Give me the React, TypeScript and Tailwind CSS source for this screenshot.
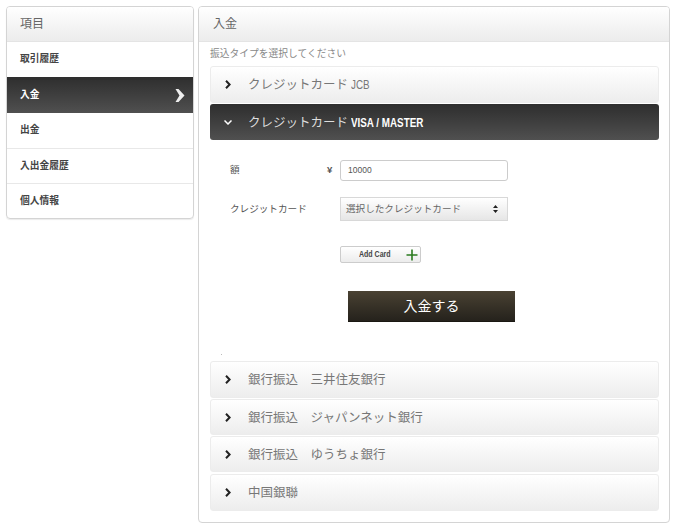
const font = { fontFamily: '"Liberation Sans", "Noto Sans CJK JP", sans-serif' };

const menu = ["取引履歴", "入金", "出金", "入出金履歴", "個人情報"];

function Arrow() {
  return (
    <svg width="6" height="9" viewBox="0 0 6 9" fill="none" className="ml-[14px] stroke-[#222]" strokeWidth="2">
      <path d="M1 0.8 4.6 4.5 1 8.2" />
    </svg>
  );
}

function Row({ label, latin, className = "h-[37px]" }: { label: string; latin?: string; className?: string }) {
  return (
    <div className={`flex items-center rounded-[3px] border border-[#ececec] bg-gradient-to-b from-white to-[#ededed] ${className}`}>
      <Arrow />
      <span className="ml-[17px] pt-px text-[12.5px] text-[#777]">
        {label}
        {latin && <span className="ml-[3px] inline-block origin-left scale-x-[0.82] text-[12px]">{latin}</span>}
      </span>
    </div>
  );
}

export default function App() {
  return (
    <div style={font} className="flex h-[530px] w-[674px] items-start gap-[4px] bg-white pl-[6px] pt-[6px]">
      <div className="w-[188px] overflow-hidden rounded-[4px] border border-[#d4d4d4] shadow-[0_1px_1px_rgba(0,0,0,0.08)]">
        <div className="flex h-[35px] items-center border-b border-[#e4e4e4] bg-gradient-to-b from-white to-[#ececec] pl-[13px] text-[12px] text-[#666]">
          項目
        </div>
        {menu.map((m, i) =>
          i === 1 ? (
            <div key={m} className="flex h-[36px] items-center justify-between bg-gradient-to-b from-[#2e2e2e] to-[#505050] pl-[13px] pr-[8px] text-[9.75px] font-bold text-white">
              {m}
              <svg width="10" height="13" viewBox="0 0 10 13" className="fill-[#eee]">
                <path d="M0.5 0H3.5L9.5 6.5 3.5 13H0.5L4.5 6.5Z" />
              </svg>
            </div>
          ) : (
            <div key={m} className={`flex h-[35px] items-center pl-[13px] text-[9.75px] font-bold text-[#444] ${i > 2 ? "border-t border-[#e8e8e8]" : ""}`}>
              {m}
            </div>
          )
        )}
      </div>

      <div className="h-[517px] w-[472px] overflow-hidden rounded-[4px] border border-[#d4d4d4]">
        <div className="flex h-[35px] items-center border-b border-[#e4e4e4] bg-gradient-to-b from-white to-[#ececec] pl-[14px] text-[12px] text-[#666]">
          入金
        </div>
        <div className="pl-[11px] pr-[10px]">
          <p className="flex h-[24px] items-center text-[9.75px] text-[#888]">振込タイプを選択してください</p>
          <Row label="クレジットカード" latin="JCB" />
          <div className="mt-px flex h-[36px] items-center rounded-[3px] bg-gradient-to-b from-[#2e2e2e] to-[#505050] pt-px">
            <svg width="8" height="5" viewBox="0 0 8 5" fill="none" className="ml-[14px] stroke-white" strokeWidth="1.5">
              <path d="M0.5 0.5 4 4 7.5 0.5" />
            </svg>
            <span className="ml-[16px] pt-px text-[12.5px] text-[#ddd]">
              クレジットカード
              <span className="ml-[3px] inline-block origin-left scale-x-[0.82] text-[12px] font-bold text-white">VISA / MASTER</span>
            </span>
          </div>

          <div className="flex flex-col pl-[20px] text-[9.6px] text-[#555]">
            <div className="mt-[20px] flex h-[21px] items-center">
              <span className="w-[97px]">額</span>
              <span className="w-[13px] font-bold">¥</span>
              <div className="flex h-[21px] w-[168px] items-center rounded-[3px] border border-[#ccc] pl-[7px] text-[8.5px] text-[#555]">10000</div>
            </div>
            <div className="mt-[16px] flex h-[24px] items-center">
              <span className="w-[110px]">クレジットカード</span>
              <div className="flex h-[24px] w-[168px] items-center justify-between border border-[#d8d8d8] bg-gradient-to-b from-white to-[#e6e6e6] pl-[5px] pr-[9px] text-[#666]">
                選択したクレジットカード
                <svg width="5" height="8" viewBox="0 0 5 8" className="fill-[#222]">
                  <path d="M2.5 0 5 3H0ZM2.5 8 0 5H5Z" />
                </svg>
              </div>
            </div>
            <div className="ml-[110px] mt-[25px] flex h-[17px] w-[81px] items-center justify-between self-start rounded-[2px] border border-[#ccc] bg-gradient-to-b from-white to-[#ececec] pl-[18px] pr-[2px]">
              <span className="inline-block origin-left scale-x-[0.78] text-[9px] font-bold text-[#444]">Add Card</span>
              <svg width="12" height="12" viewBox="0 0 12 12" className="stroke-[#2a7a1e]" strokeWidth="1.6">
                <path d="M6 0.5V11.5M0.5 6H11.5" />
              </svg>
            </div>
            <div className="ml-[118px] mt-[28px] flex h-[31px] w-[167px] items-center justify-center border-b border-[#1a1812] bg-gradient-to-b from-[#4a4233] to-[#25221c] text-[14px] text-white">
              入金する
            </div>
            <div className="ml-[-9px] mt-[32px] h-px w-px bg-[#bbb]" />
          </div>

          <div className="mt-[6px] flex flex-col">
            <Row label="銀行振込　三井住友銀行" className="h-[37px]" />
            <Row label="銀行振込　ジャパンネット銀行" className="mt-px h-[36px] pt-px" />
            <Row label="銀行振込　ゆうちょ銀行" className="mt-px h-[36px] pt-px" />
            <Row label="中国銀聯" className="mt-[2px] h-[37px]" />
          </div>
        </div>
      </div>
    </div>
  );
}
